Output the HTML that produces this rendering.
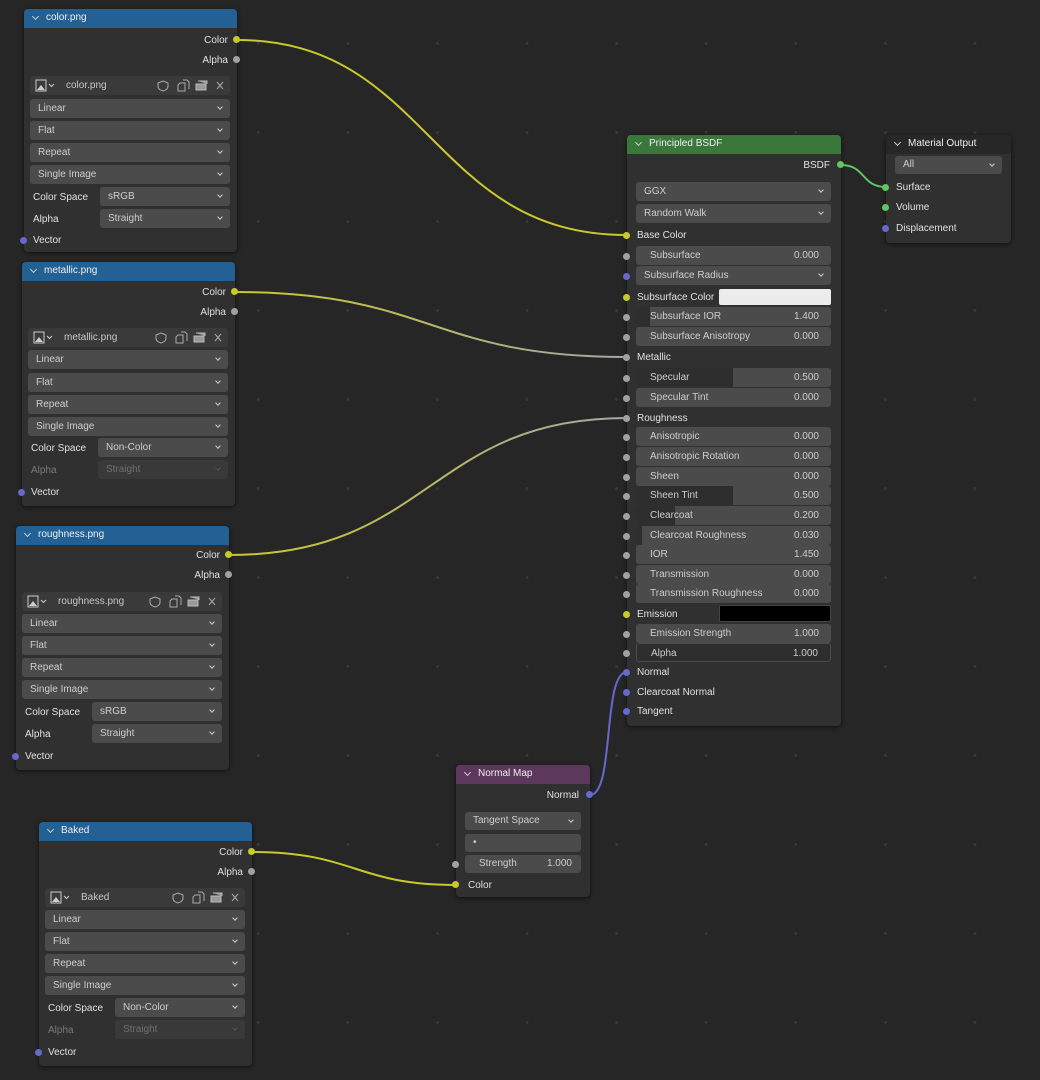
<!DOCTYPE html>
<html><head><meta charset="utf-8">
<style>
*{margin:0;padding:0;box-sizing:border-box}
body{width:1040px;height:1080px;overflow:hidden;background:#262626;font-family:"Liberation Sans",sans-serif;font-size:10px;color:#e0e0e0;position:relative;
background-image:radial-gradient(circle,#383838 1.3px,transparent 1.6px);background-size:89.6px 89px;background-position:303px -1px}
.n{position:absolute;background:#303030;border-radius:4px;box-shadow:0 1px 4px rgba(0,0,0,.6)}
.h{position:absolute;left:0;top:0;right:0;height:19px;border-radius:4px 4px 0 0;line-height:18px;padding-left:22px;color:#eee;font-size:10px}
.h:before{content:"";position:absolute;left:9px;top:5px;width:4px;height:4px;border-right:1px solid #ccc;border-bottom:1px solid #ccc;transform:rotate(45deg)}
.blue{background:#236195}.green{background:#3a773a}.purple{background:#5c395c}.dark{background:#272727}
.l{position:absolute;line-height:14px;white-space:nowrap;margin-top:1px}
.r{text-align:right}
.s{position:absolute;width:7px;height:7px;border-radius:50%}
.y{background:#c9c92b}.g{background:#a1a1a1}.p{background:#6767d0}.gr{background:#5fc75f}
.f{position:absolute;height:19px;background:#4b4b4b;border-radius:3px;line-height:19px;padding-left:8px;color:#cdcdcd;overflow:hidden}
.f.dd:after{content:"";position:absolute;right:8px;top:6px;width:3px;height:3px;border-right:1px solid #ccc;border-bottom:1px solid #ccc;transform:rotate(45deg)}
.f.dis{background:#393939;color:#6f6f6f}.f.dis:after{border-color:#555}
.f .v{position:absolute;right:12px;top:0}
.f .fill{position:absolute;left:0;top:0;bottom:0;background:#2e2e2e}
.f .t{position:relative;padding-left:6px}
.img{position:absolute;height:19px;background:#3a3a3a;border-radius:3px;color:#c8c8c8;line-height:19px}
.dim{color:#7a7a7a}
</style></head><body>

<svg width="1040" height="1080" style="position:absolute;left:0;top:0" fill="none">
<defs>
<linearGradient id="gm" x1="235" y1="0" x2="627" y2="0" gradientUnits="userSpaceOnUse"><stop offset="0" stop-color="#c9c92b"/><stop offset="1" stop-color="#a5a5a5"/></linearGradient>
<linearGradient id="gr" x1="229" y1="0" x2="627" y2="0" gradientUnits="userSpaceOnUse"><stop offset="0" stop-color="#c9c92b"/><stop offset="1" stop-color="#a5a5a5"/></linearGradient>
</defs>
<path d="M237 40 C430 40 430 235 627 235" stroke="#c9c92b" stroke-width="2"/>
<path d="M235 292 C430 292 430 357 627 357" stroke="url(#gm)" stroke-width="2"/>
<path d="M229 555 C430 555 430 418 627 418" stroke="url(#gr)" stroke-width="2"/>
<path d="M252 852 C355 852 355 885 456 885" stroke="#c9c92b" stroke-width="2"/>
<path d="M590 795 C615 795 602 672 627 672" stroke="#6767d0" stroke-width="2"/>
<path d="M841 165 C866 165 861 187 886 187" stroke="#5fc75f" stroke-width="2"/>
</svg>

<div class="n" style="left:24px;top:9px;width:213px;height:243px">
 <div class="h blue">color.png</div>
 <div class="l r" style="right:9px;top:24px">Color</div><div class="s y" style="left:209px;top:27px"></div>
 <div class="l r" style="right:9px;top:44px">Alpha</div><div class="s g" style="left:209px;top:47px"></div>
 <div class="img" style="left:6px;top:67px;width:200px"><svg width="200" height="19" fill="none" style="position:absolute;left:0;top:0"><rect x="6" y="4" width="10" height="11" stroke="#ccc"/><path d="M7 14 L11 9 L15 14Z" fill="#ccc"/><path d="M19 8 l2.5 2.5 l2.5-2.5" stroke="#ccc"/><path d="M133 5 l5 2 v3 c0 3-2 4-5 5 c-3-1-5-2-5-5 v-3z" stroke="#aaa"/><path d="M150 7 h5 v8 h-7 v-6z M153 4 h4 l2 2 v7" stroke="#aaa"/><path d="M166 8 h10 v6 h-10z M168 5 h9 v3" stroke="#bbb" fill="#999"/><path d="M187 6 l6 7 M193 6 l-6 7" stroke="#aaa"/></svg><span style="position:absolute;left:36px">color.png</span></div>
 <div class="f dd" style="left:6px;top:90px;width:200px">Linear</div>
 <div class="f dd" style="left:6px;top:112px;width:200px">Flat</div>
 <div class="f dd" style="left:6px;top:134px;width:200px">Repeat</div>
 <div class="f dd" style="left:6px;top:156px;width:200px">Single Image</div>
 <div class="l" style="left:9px;top:181px">Color Space</div><div class="f dd" style="left:76px;top:178px;width:130px">sRGB</div>
 <div class="l" style="left:9px;top:203px">Alpha</div><div class="f dd" style="left:76px;top:200px;width:130px">Straight</div>
 <div class="s p" style="left:-4px;top:228px"></div><div class="l" style="left:9px;top:224px">Vector</div>
</div>

<div class="n" style="left:22px;top:262px;width:213px;height:244px">
 <div class="h blue">metallic.png</div>
 <div class="l r" style="right:9px;top:23px">Color</div><div class="s y" style="left:209px;top:26px"></div>
 <div class="l r" style="right:9px;top:43px">Alpha</div><div class="s g" style="left:209px;top:46px"></div>
 <div class="img" style="left:6px;top:66px;width:200px"><svg width="200" height="19" fill="none" style="position:absolute;left:0;top:0"><rect x="6" y="4" width="10" height="11" stroke="#ccc"/><path d="M7 14 L11 9 L15 14Z" fill="#ccc"/><path d="M19 8 l2.5 2.5 l2.5-2.5" stroke="#ccc"/><path d="M133 5 l5 2 v3 c0 3-2 4-5 5 c-3-1-5-2-5-5 v-3z" stroke="#aaa"/><path d="M150 7 h5 v8 h-7 v-6z M153 4 h4 l2 2 v7" stroke="#aaa"/><path d="M166 8 h10 v6 h-10z M168 5 h9 v3" stroke="#bbb" fill="#999"/><path d="M187 6 l6 7 M193 6 l-6 7" stroke="#aaa"/></svg><span style="position:absolute;left:36px">metallic.png</span></div>
 <div class="f dd" style="left:6px;top:88px;width:200px">Linear</div>
 <div class="f dd" style="left:6px;top:111px;width:200px">Flat</div>
 <div class="f dd" style="left:6px;top:133px;width:200px">Repeat</div>
 <div class="f dd" style="left:6px;top:155px;width:200px">Single Image</div>
 <div class="l" style="left:9px;top:179px">Color Space</div><div class="f dd" style="left:76px;top:176px;width:130px">Non-Color</div>
 <div class="l dim" style="left:9px;top:201px">Alpha</div><div class="f dd dis" style="left:76px;top:198px;width:130px">Straight</div>
 <div class="s p" style="left:-4px;top:227px"></div><div class="l" style="left:9px;top:223px">Vector</div>
</div>

<div class="n" style="left:16px;top:526px;width:213px;height:244px">
 <div class="h blue">roughness.png</div>
 <div class="l r" style="right:9px;top:22px">Color</div><div class="s y" style="left:209px;top:25px"></div>
 <div class="l r" style="right:9px;top:42px">Alpha</div><div class="s g" style="left:209px;top:45px"></div>
 <div class="img" style="left:6px;top:66px;width:200px"><svg width="200" height="19" fill="none" style="position:absolute;left:0;top:0"><rect x="6" y="4" width="10" height="11" stroke="#ccc"/><path d="M7 14 L11 9 L15 14Z" fill="#ccc"/><path d="M19 8 l2.5 2.5 l2.5-2.5" stroke="#ccc"/><path d="M133 5 l5 2 v3 c0 3-2 4-5 5 c-3-1-5-2-5-5 v-3z" stroke="#aaa"/><path d="M150 7 h5 v8 h-7 v-6z M153 4 h4 l2 2 v7" stroke="#aaa"/><path d="M166 8 h10 v6 h-10z M168 5 h9 v3" stroke="#bbb" fill="#999"/><path d="M187 6 l6 7 M193 6 l-6 7" stroke="#aaa"/></svg><span style="position:absolute;left:36px">roughness.png</span></div>
 <div class="f dd" style="left:6px;top:88px;width:200px">Linear</div>
 <div class="f dd" style="left:6px;top:110px;width:200px">Flat</div>
 <div class="f dd" style="left:6px;top:132px;width:200px">Repeat</div>
 <div class="f dd" style="left:6px;top:154px;width:200px">Single Image</div>
 <div class="l" style="left:9px;top:179px">Color Space</div><div class="f dd" style="left:76px;top:176px;width:130px">sRGB</div>
 <div class="l" style="left:9px;top:201px">Alpha</div><div class="f dd" style="left:76px;top:198px;width:130px">Straight</div>
 <div class="s p" style="left:-4px;top:227px"></div><div class="l" style="left:9px;top:223px">Vector</div>
</div>

<div class="n" style="left:39px;top:822px;width:213px;height:244px">
 <div class="h blue">Baked</div>
 <div class="l r" style="right:9px;top:23px">Color</div><div class="s y" style="left:209px;top:26px"></div>
 <div class="l r" style="right:9px;top:43px">Alpha</div><div class="s g" style="left:209px;top:46px"></div>
 <div class="img" style="left:6px;top:66px;width:200px"><svg width="200" height="19" fill="none" style="position:absolute;left:0;top:0"><rect x="6" y="4" width="10" height="11" stroke="#ccc"/><path d="M7 14 L11 9 L15 14Z" fill="#ccc"/><path d="M19 8 l2.5 2.5 l2.5-2.5" stroke="#ccc"/><path d="M133 5 l5 2 v3 c0 3-2 4-5 5 c-3-1-5-2-5-5 v-3z" stroke="#aaa"/><path d="M150 7 h5 v8 h-7 v-6z M153 4 h4 l2 2 v7" stroke="#aaa"/><path d="M166 8 h10 v6 h-10z M168 5 h9 v3" stroke="#bbb" fill="#999"/><path d="M187 6 l6 7 M193 6 l-6 7" stroke="#aaa"/></svg><span style="position:absolute;left:36px">Baked</span></div>
 <div class="f dd" style="left:6px;top:88px;width:200px">Linear</div>
 <div class="f dd" style="left:6px;top:110px;width:200px">Flat</div>
 <div class="f dd" style="left:6px;top:132px;width:200px">Repeat</div>
 <div class="f dd" style="left:6px;top:154px;width:200px">Single Image</div>
 <div class="l" style="left:9px;top:179px">Color Space</div><div class="f dd" style="left:76px;top:176px;width:130px">Non-Color</div>
 <div class="l dim" style="left:9px;top:201px">Alpha</div><div class="f dd dis" style="left:76px;top:198px;width:130px">Straight</div>
 <div class="s p" style="left:-4px;top:227px"></div><div class="l" style="left:9px;top:223px">Vector</div>
</div>

<div class="n" style="left:627px;top:135px;width:214px;height:591px">
 <div class="h green">Principled BSDF</div>
 <div class="l r" style="right:11px;top:23px">BSDF</div><div class="s gr" style="left:210px;top:26px"></div>
 <div class="f dd" style="left:9px;top:47px;width:195px">GGX</div>
 <div class="f dd" style="left:9px;top:69px;width:195px">Random Walk</div>
 <div class="s y" style="left:-4px;top:97px"></div><div class="l" style="left:10px;top:93px">Base Color</div>
 <div class="s g" style="left:-4px;top:118px"></div><div class="f" style="left:9px;top:111px;width:195px"><span class="t">Subsurface</span><span class="v">0.000</span></div>
 <div class="s p" style="left:-4px;top:138px"></div><div class="f dd" style="left:9px;top:131px;width:195px">Subsurface Radius</div>
 <div class="s y" style="left:-4px;top:159px"></div><div class="l" style="left:10px;top:155px">Subsurface Color</div><div style="position:absolute;left:92px;top:154px;width:112px;height:16px;background:#ececec;border-radius:2px"></div>
 <div class="s g" style="left:-4px;top:179px"></div><div class="f" style="left:9px;top:172px;width:195px"><span class="fill" style="width:14px"></span><span class="t">Subsurface IOR</span><span class="v">1.400</span></div>
 <div class="s g" style="left:-4px;top:199px"></div><div class="f" style="left:9px;top:192px;width:195px"><span class="t">Subsurface Anisotropy</span><span class="v">0.000</span></div>
 <div class="s g" style="left:-4px;top:219px"></div><div class="l" style="left:10px;top:215px">Metallic</div>
 <div class="s g" style="left:-4px;top:240px"></div><div class="f" style="left:9px;top:233px;width:195px"><span class="fill" style="width:97px"></span><span class="t">Specular</span><span class="v">0.500</span></div>
 <div class="s g" style="left:-4px;top:260px"></div><div class="f" style="left:9px;top:253px;width:195px"><span class="t">Specular Tint</span><span class="v">0.000</span></div>
 <div class="s g" style="left:-4px;top:280px"></div><div class="l" style="left:10px;top:276px">Roughness</div>
 <div class="s g" style="left:-4px;top:299px"></div><div class="f" style="left:9px;top:292px;width:195px"><span class="t">Anisotropic</span><span class="v">0.000</span></div>
 <div class="s g" style="left:-4px;top:319px"></div><div class="f" style="left:9px;top:312px;width:195px"><span class="t">Anisotropic Rotation</span><span class="v">0.000</span></div>
 <div class="s g" style="left:-4px;top:339px"></div><div class="f" style="left:9px;top:332px;width:195px"><span class="t">Sheen</span><span class="v">0.000</span></div>
 <div class="s g" style="left:-4px;top:358px"></div><div class="f" style="left:9px;top:351px;width:195px"><span class="fill" style="width:97px"></span><span class="t">Sheen Tint</span><span class="v">0.500</span></div>
 <div class="s g" style="left:-4px;top:378px"></div><div class="f" style="left:9px;top:371px;width:195px"><span class="fill" style="width:39px"></span><span class="t">Clearcoat</span><span class="v">0.200</span></div>
 <div class="s g" style="left:-4px;top:398px"></div><div class="f" style="left:9px;top:391px;width:195px"><span class="fill" style="width:6px"></span><span class="t">Clearcoat Roughness</span><span class="v">0.030</span></div>
 <div class="s g" style="left:-4px;top:417px"></div><div class="f" style="left:9px;top:410px;width:195px"><span class="t">IOR</span><span class="v">1.450</span></div>
 <div class="s g" style="left:-4px;top:437px"></div><div class="f" style="left:9px;top:430px;width:195px"><span class="t">Transmission</span><span class="v">0.000</span></div>
 <div class="s g" style="left:-4px;top:456px"></div><div class="f" style="left:9px;top:449px;width:195px"><span class="t">Transmission Roughness</span><span class="v">0.000</span></div>
 <div class="s y" style="left:-4px;top:476px"></div><div class="l" style="left:10px;top:472px">Emission</div><div style="position:absolute;left:92px;top:470px;width:112px;height:17px;background:#000;border-radius:2px;border:1px solid #444"></div>
 <div class="s g" style="left:-4px;top:496px"></div><div class="f" style="left:9px;top:489px;width:195px"><span class="t">Emission Strength</span><span class="v">1.000</span></div>
 <div class="s g" style="left:-4px;top:515px"></div><div class="f" style="left:9px;top:508px;width:195px;border:1px solid #4b4b4b"><span class="fill" style="width:195px"></span><span class="t">Alpha</span><span class="v">1.000</span></div>
 <div class="s p" style="left:-4px;top:534px"></div><div class="l" style="left:10px;top:530px">Normal</div>
 <div class="s p" style="left:-4px;top:554px"></div><div class="l" style="left:10px;top:550px">Clearcoat Normal</div>
 <div class="s p" style="left:-4px;top:573px"></div><div class="l" style="left:10px;top:569px">Tangent</div>
</div>

<div class="n" style="left:886px;top:135px;width:125px;height:108px">
 <div class="h dark">Material Output</div>
 <div class="f dd" style="left:9px;top:21px;width:107px;height:18px;line-height:18px">All</div>
 <div class="s gr" style="left:-4px;top:49px"></div><div class="l" style="left:10px;top:45px">Surface</div>
 <div class="s gr" style="left:-4px;top:69px"></div><div class="l" style="left:10px;top:65px">Volume</div>
 <div class="s p" style="left:-4px;top:90px"></div><div class="l" style="left:10px;top:86px">Displacement</div>
</div>

<div class="n" style="left:456px;top:765px;width:134px;height:132px">
 <div class="h purple">Normal Map</div>
 <div class="l r" style="right:11px;top:23px">Normal</div><div class="s p" style="left:130px;top:26px"></div>
 <div class="f dd" style="left:9px;top:47px;width:116px;height:18px;line-height:18px">Tangent Space</div>
 <div class="f" style="left:9px;top:69px;width:116px;height:18px;line-height:18px">•</div>
 <div class="s g" style="left:-4px;top:96px"></div><div class="f" style="left:9px;top:90px;width:116px;height:18px;line-height:18px"><span class="t">Strength</span><span class="v" style="right:9px">1.000</span></div>
 <div class="s y" style="left:-4px;top:116px"></div><div class="l" style="left:12px;top:113px">Color</div>
</div>

</body></html>
